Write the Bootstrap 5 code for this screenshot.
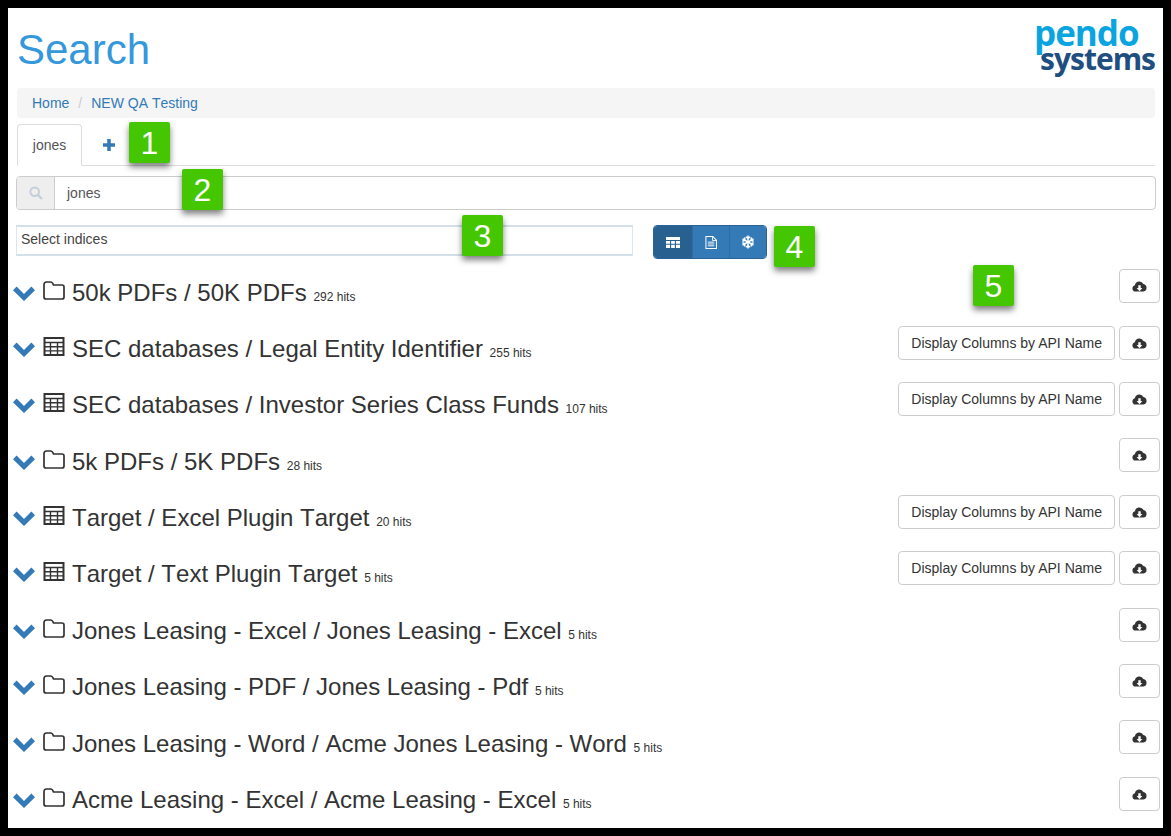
<!DOCTYPE html>
<html lang="en">
<head>
  <meta charset="UTF-8" />
  <title>Search</title>
  <link href="https://cdn.jsdelivr.net/npm/bootstrap@5.3.0/dist/css/bootstrap.min.css" rel="stylesheet"/>
  <style>
    body {
      margin: 0;
      background: #fff;
      font-family: "Liberation Sans", Arial, sans-serif;
      font-size: 14px;
      color: #333;
      font-kerning: none;
    }
    .shot {
      position: relative;
      height: 836px;
      border: 8px solid #000;
      padding: 0 3px 0 8px;
      overflow: hidden;
    }
    .page-top { height: 80px; padding: 0 0 0 1px; margin-right: 5px; }
    .page-top h1 { font-size: 42px; line-height: 46px; margin: 19px 0 0; color: #3498db; font-weight: 400; font-kerning: normal; }
    .logo { width: 122px; margin: 11px 0 0; line-height: 1; font-family: "Open Sans", sans-serif; font-weight: 700; letter-spacing: -1px; }
    .logo-top { display: block; font-size: 35px; line-height: 28px; color: #0aa5e0; padding-left: 1px; }
    .logo-bottom { display: block; font-size: 30px; line-height: 24px; color: #1f4e80; padding-left: 7px; }
    .crumbs { height: 30px; margin: 0 5px 6px 1px; padding: 0 15px; background: #f5f5f5; border-radius: 4px; line-height: 30px; }
    .crumbs a { color: #337ab7; text-decoration: none; }
    .crumbs i { color: #ccc; font-style: normal; padding: 0 9px 0 9px; }
    .tabbar { height: 42px; margin: 0 5px 10px 1px; border-bottom: 1px solid #ddd; }
    .tab-on { width: 65px; height: 42px; line-height: 40px; text-align: center; border: 1px solid #ddd; border-bottom-color: #fff; border-radius: 4px 4px 0 0; color: #555; background: #fff; }
    .tab-add { padding: 10px 0 0 21px; color: #337ab7; }
    .searchbar { height: 34px; margin: 0 4px 15px 0; border: 1px solid #ccc; border-radius: 4px; overflow: hidden; }
    .search-addon { width: 38px; background: #eee; border-right: 1px solid #ccc; }
    .search-value { padding-left: 12px; color: #555; line-height: 32px; }
    .filter-row { height: 34px; margin-bottom: 4px; }
    .index-box { width: 617px; height: 31px; padding-left: 4px; line-height: 25px; border: 1px solid #dde6ef; border-top: 2px solid #d3dfea; border-bottom: 2px solid #d3dfea; color: #444; }
    .view-btns { margin-left: 20px; border: 1px solid #2a6496; border-radius: 4px; overflow: hidden; height: 34px; }
    .view-btn { height: 32px; background: #337ab7; border-left: 1px solid #2e6da4; }
    .view-btn:first-child { border-left: 0; background: #286090; }
    .result-row { height: 56.4px; margin-left: -3px; }
    .result-name { padding-top: 12.5px; font-size: 24px; line-height: 34px; white-space: nowrap; }
    .result-name small { font-size: 12px; }
    .chev { margin-right: 8px; vertical-align: 0; }
    .kind { margin-right: 7px; vertical-align: 1px; }
    .result-btns { padding-top: 6.3px; gap: 4px; }
    .plain-btn { height: 34px; padding: 0 12px; line-height: 32px; font-size: 14px; color: #333; background: #fff; border: 1px solid #ccc; border-radius: 4px; }
    .dl-btn { width: 41px; padding: 0; }
    .callout { position: absolute; width: 41px; height: 41px; background: #44c700; color: #fff; border-radius: 2px; font-size: 32px; line-height: 43px; text-align: center; box-shadow: 0 4px 6px rgba(0,0,0,.5); }
  </style>
</head>
<body>
  <svg width="0" height="0" class="position-absolute">
    <defs>
      <symbol id="ic-chev" viewBox="0 0 22 15"><path d="M0 4.2 L3.6 .6 L11 8 L18.4 .6 L22 4.2 L11 15 Z" fill="#337ab7"/></symbol>
      <symbol id="ic-folder" viewBox="0 0 22 19"><path d="M1 4 Q1 1 3.5 1 H7.5 Q9.5 1 10.5 4 H19 Q21 4 21 6 V16 Q21 18 19 18 H3 Q1 18 1 16 Z" fill="none" stroke="#333" stroke-width="1.7"/></symbol>
      <symbol id="ic-table" viewBox="0 0 22 19"><path d="M1.5 1h19v17h-19z" fill="none" stroke="#333" stroke-width="2"/><path d="M1 5.5h20M1 9.7h20M1 13.9h20M7.5 5v13M14.5 5v13" stroke="#333" stroke-width="1.4"/></symbol>
      <symbol id="ic-cloud" viewBox="0 0 15 12"><path d="M3.4 11.6 A3.2 3.2 0 0 1 2.9 5.3 A4.5 4.5 0 0 1 11.4 4 A3.9 3.9 0 0 1 11.6 11.6 Z" fill="#333"/><path d="M7.5 11.2 L4.6 8 H6.3 V5.2 H8.7 V8 H10.4 Z" fill="#fff"/></symbol>
      <g id="flake-arm"><path d="M7 7V.6M4.9 1.7L7 3.6 9.1 1.7" fill="none" stroke="#fff" stroke-width="1.5"/></g>
    </defs>
  </svg>

  <div class="shot">
    <div class="page-top d-flex justify-content-between">
      <h1>Search</h1>
      <div class="logo"><span class="logo-top">pendo</span><span class="logo-bottom">systems</span></div>
    </div>

    <div class="crumbs"><a href="#">Home</a><i>/</i><a href="#">NEW QA Testing</a></div>

    <div class="tabbar d-flex">
      <div class="tab-on">jones</div>
      <div class="tab-add">
        <svg width="12" height="12" viewBox="0 0 13 13"><path d="M4.6 0h3.8v4.6H13v3.8H8.4V13H4.6V8.4H0V4.6h4.6z" fill="#337ab7"/></svg>
      </div>
    </div>

    <div class="searchbar d-flex">
      <div class="search-addon d-flex align-items-center justify-content-center">
        <svg width="14" height="14" viewBox="0 0 14 14"><circle cx="5.7" cy="5.7" r="4.3" fill="none" stroke="#c5ced9" stroke-width="2"/><path d="M9 9l4 4" stroke="#c5ced9" stroke-width="2.4"/></svg>
      </div>
      <div class="search-value">jones</div>
    </div>

    <div class="filter-row d-flex">
      <div class="index-box">Select indices</div>
      <div class="view-btns d-flex">
        <div class="view-btn d-flex align-items-center justify-content-center" style="width:38px">
          <svg width="14" height="11" viewBox="0 0 14 11"><path d="M0 0h14v11H0z" fill="#fff"/><path d="M0 3.5h14M0 7.2h14M4.6 3v8M9.4 3v8" stroke="#286090" stroke-width="1.1"/></svg>
        </div>
        <div class="view-btn d-flex align-items-center justify-content-center" style="width:37px">
          <svg width="12" height="13" viewBox="0 0 13 14"><path d="M1 .6h7.5L12.4 4.5V13.4H1z" fill="none" stroke="#fff" stroke-width="1.1"/><path d="M8.2.8V4.8H12.2M3 6.6h7M3 8.6h7M3 10.6h7" fill="none" stroke="#fff" stroke-width="1"/></svg>
        </div>
        <div class="view-btn d-flex align-items-center justify-content-center" style="width:37px">
          <svg width="14" height="14" viewBox="0 0 14 14">
            <use href="#flake-arm"/>
            <use href="#flake-arm" transform="rotate(60 7 7)"/>
            <use href="#flake-arm" transform="rotate(120 7 7)"/>
            <use href="#flake-arm" transform="rotate(180 7 7)"/>
            <use href="#flake-arm" transform="rotate(240 7 7)"/>
            <use href="#flake-arm" transform="rotate(300 7 7)"/>
          </svg>
        </div>
      </div>
    </div>

    <div id="results"></div>

    <div class="callout" style="left:121px;top:114px">1</div>
    <div class="callout" style="left:174px;top:161px">2</div>
    <div class="callout" style="left:454px;top:207px">3</div>
    <div class="callout" style="left:766px;top:218px">4</div>
    <div class="callout" style="left:965px;top:257px">5</div>
  </div>

  <script>
    const rows = [
      ["folder", "50k PDFs / 50K PDFs", "292 hits"],
      ["table", "SEC databases / Legal Entity Identifier", "255 hits"],
      ["table", "SEC databases / Investor Series Class Funds", "107 hits"],
      ["folder", "5k PDFs / 5K PDFs", "28 hits"],
      ["table", "Target / Excel Plugin Target", "20 hits"],
      ["table", "Target / Text Plugin Target", "5 hits"],
      ["folder", "Jones Leasing - Excel / Jones Leasing - Excel", "5 hits"],
      ["folder", "Jones Leasing - PDF / Jones Leasing - Pdf", "5 hits"],
      ["folder", "Jones Leasing - Word / Acme Jones Leasing - Word", "5 hits"],
      ["folder", "Acme Leasing - Excel / Acme Leasing - Excel", "5 hits"]
    ];
    document.getElementById("results").innerHTML = rows.map(r => `
      <div class="result-row d-flex justify-content-between">
        <div class="result-name">
          <svg class="chev" width="22" height="15"><use href="#ic-chev"/></svg><svg class="kind" width="22" height="19"><use href="#ic-${r[0]}"/></svg>${r[1]} <small>${r[2]}</small>
        </div>
        <div class="result-btns d-flex">
          ${r[0] === "table" ? '<button class="plain-btn">Display Columns by API Name</button>' : ''}
          <button class="plain-btn dl-btn d-flex align-items-center justify-content-center"><svg width="15" height="12"><use href="#ic-cloud"/></svg></button>
        </div>
      </div>`).join("");
  </script>
  <script src="https://cdn.jsdelivr.net/npm/bootstrap@5.3.0/dist/js/bootstrap.bundle.min.js"></script>
</body>
</html>
